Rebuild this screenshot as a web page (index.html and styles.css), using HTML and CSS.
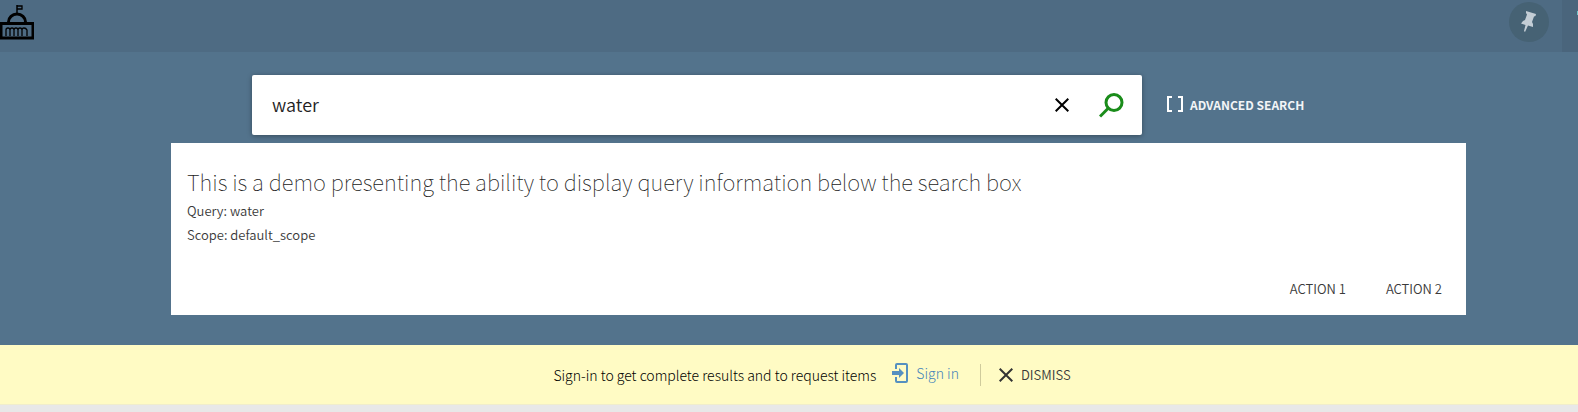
FILE: index.html
```html
<!DOCTYPE html>
<html lang="en">
<head>
<meta charset="utf-8">
<title>Library search</title>
<link rel="stylesheet" href="styles.css">
</head>
<body>
<header class="topbar">
  <a class="logo" href="#" aria-label="Library home">
    <svg width="34" height="36" viewBox="0 0 34 36" fill="none" stroke="#000">
      <path d="M17 9V0" stroke-width="1.500"/>
      <path d="M17 1H22V4H17" stroke-width="1.300"/>
      <path d="M8.500 18V17A8.500 8 0 0 1 25.500 17V18" stroke-width="3"/>
      <path d="M1 18.500H33V33H1Z" stroke-width="3"/>
      <path d="M6 31V25Q6 23 8 23T10 25V31M10 25Q10 23 12 23T14 25V31M14 25Q14 23 16 23T18 25V31M18 25Q18 23 20 23T22 25V31M22 25Q22 23 24 23T27 25V31" stroke-width="1.300"/>
    </svg>
  </a>
  <div class="tools">
    <button class="pin" type="button" aria-label="Saved items">
      <svg width="16" height="22" viewBox="0 0 16 22" fill="#c3cdd5"><path d="M5 0L15 3L14.500 5L13 5.500L11 11L12 13V16L7 14.500L4 21L3 20L4.500 14L0 12.500L2 10L4 9L6 3.500L5 2Z"/></svg>
    </button>
    <div class="user"><span class="dot"></span></div>
  </div>
</header>
<main class="main">
  <form class="search-row">
    <div class="search-box">
      <input class="query" type="text" value="water" aria-label="Search">
      <button class="icon-button" type="button" aria-label="Clear">
        <svg width="14" height="14" viewBox="0 0 14 14" fill="none" stroke="#000" stroke-width="2"><path d="M.7.7L13.300 13.300M13.300.7L.7 13.300"/></svg>
      </button>
      <button class="icon-button" type="button" aria-label="Submit search">
        <svg width="26" height="26" viewBox="0 0 26 26" fill="none" stroke="#1a8c1a"><circle cx="15" cy="10.500" r="8" stroke-width="3"/><path d="M9 16.500L1 24.500" stroke-width="3"/></svg>
      </button>
    </div>
    <a class="advanced" href="#">
      <svg width="16" height="16" viewBox="0 0 16 16" fill="none" stroke="#fff" stroke-width="2"><path d="M5 1H1V15H5M11 1H15V15H11"/></svg>
      <span>ADVANCED SEARCH</span>
    </a>
  </form>
  <div class="card-row">
    <section class="card">
      <h1 class="title">This is a demo presenting the ability to display query information below the search box</h1>
      <p class="info">Query: water</p>
      <p class="info">Scope: default_scope</p>
      <div class="actions">
        <button class="action" type="button">ACTION 1</button>
        <button class="action" type="button">ACTION 2</button>
      </div>
    </section>
  </div>
</main>
<aside class="notice">
  <span class="message">Sign-in to get complete results and to request items</span>
  <a class="signin" href="#">
    <svg width="16" height="20" viewBox="0 0 16 20" fill="none" stroke="#5590c0" stroke-width="2"><path d="M4 6V2Q4 1 5 1H14Q15 1 15 2V18Q15 19 14 19H5Q4 19 4 18V14"/><path d="M0 10H8" stroke-width="4"/><path d="M7 5L12 10L7 15Z" fill="#5590c0" stroke="none"/></svg>
    <span>Sign in</span>
  </a>
  <button class="dismiss" type="button">
    <svg width="14" height="14" viewBox="0 0 14 14" fill="none" stroke="#333" stroke-width="2"><path d="M.7.7L13.300 13.300M13.300.7L.7 13.300"/></svg>
    <span>DISMISS</span>
  </button>
</aside>
</body>
</html>
```
FILE: styles.css
```css
* { box-sizing: border-box; }
body {
  margin: 0;
  background: #e8e8e8;
  color: #3a3a3a;
  font-family: "Source Sans Pro", "Noto Sans CJK SC", sans-serif;
  font-size: 13px;
  font-weight: 350;
}
button, input { font: inherit; color: inherit; border: 0; background: none; padding: 0; }
a { color: inherit; text-decoration: none; }
svg { display: block; flex: none; }
.topbar {
  display: flex;
  justify-content: space-between;
  height: 52px;
  background: #4e6b83;
}
.logo { padding-top: 5px; }
.tools { display: flex; gap: 13px; }
.pin {
  display: flex;
  align-items: center;
  justify-content: center;
  width: 40px;
  height: 40px;
  margin-top: 2px;
  border-radius: 50%;
  background: #466274;
}
.user { display: flex; justify-content: flex-end; width: 16px; padding-top: 11px; background: #4a657c; }
.dot { width: 1px; height: 4px; background: #6fc4c8; }
.main { padding: 23px 0 30px; background: #53738c; }
.search-row { display: grid; grid-template-columns: 252fr 890fr 436fr; align-items: center; }
.search-box {
  grid-column: 2;
  display: flex;
  align-items: center;
  height: 60px;
  padding-right: 5px;
  border-radius: 2px;
  background: #fff;
  box-shadow: 0 1px 5px rgba(0, 0, 0, .35);
}
.query { flex: 1; min-width: 0; height: 58px; margin-bottom: 2px; padding: 0 20px; font-size: 18px; color: #222; outline: 0; }
.icon-button { display: flex; align-items: center; justify-content: center; width: 50px; height: 50px; }
.advanced { display: flex; align-items: center; gap: 7px; padding: 0 0 2px 25px; color: #f2f5f7; font-size: 12px; font-weight: 700; white-space: nowrap; }
.card-row { display: grid; grid-template-columns: 171fr 1295fr 112fr; margin-top: 8px; }
.card { grid-column: 2; padding: 22px 16px 8px; background: #fff; }
.title { margin: 0 0 2px; color: #222; font-size: 22px; font-weight: 100; line-height: 32px; }
.info { margin: 0; line-height: 24px; }
.actions { display: flex; justify-content: flex-end; gap: 24px; margin-top: 24px; }
.action { padding: 0 8px; line-height: 36px; }
.notice {
  display: flex;
  align-items: center;
  justify-content: center;
  height: 60px;
  padding-left: 46px;
  background: #fffbc4;
  border-bottom: 1px solid #f0edcc;
}
.message { color: #000; font-size: 14px; font-weight: 300; }
.signin { display: flex; align-items: center; gap: 8px; margin: 0 21px 4px 16px; color: #4585ba; font-size: 14px; font-weight: 300; }
.dismiss { display: flex; align-items: center; gap: 8px; height: 22px; padding-left: 18px; border-left: 1px solid #cfcb9c; }
```
